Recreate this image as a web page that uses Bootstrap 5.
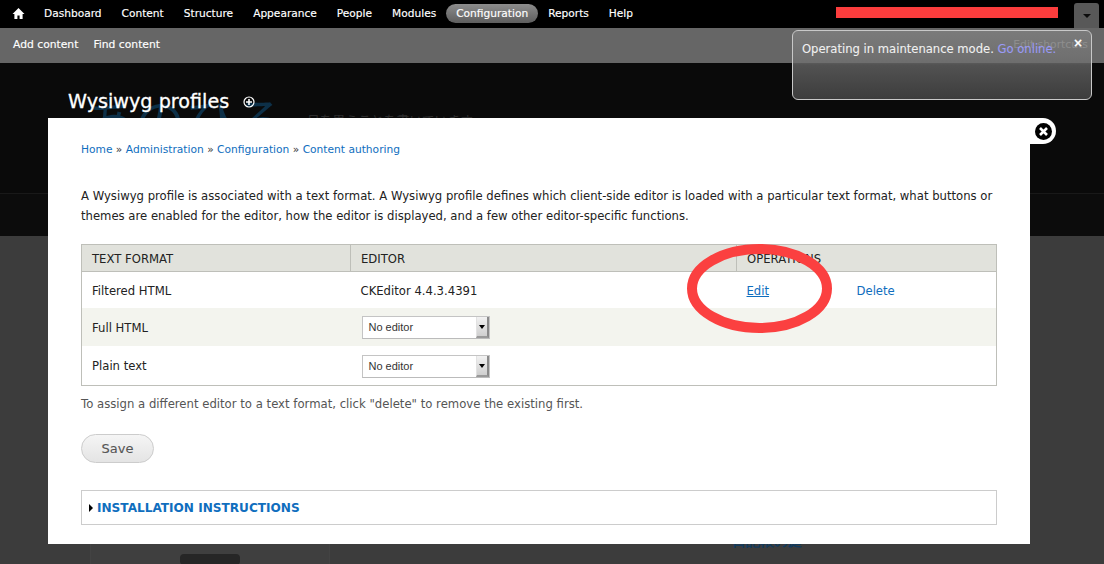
<!DOCTYPE html>
<html lang="en">
<head>
<meta charset="utf-8">
<title>Wysiwyg profiles</title>
<link rel="stylesheet" href="https://cdn.jsdelivr.net/npm/bootstrap@5.3.0/dist/css/bootstrap.min.css">
<style>
html,body{height:100%;overflow:hidden}
body{background:#3c3c3c;font-family:"DejaVu Sans","Liberation Sans",sans-serif;font-size:11.65px;color:#333;position:relative}
.adminbar{background:#000;height:28px;padding:0 0 2px 12px}
.adminbar a{color:#fff;text-decoration:none;font-size:10.62px;line-height:19px;padding:0 10px;border-radius:10px;display:block;-webkit-text-stroke:.15px #fff}
.adminbar a.home-link{padding:0;margin-right:9px;height:13px;line-height:13px}
.adminbar a.home-link svg{display:block}
.adminbar a.active-item{background:linear-gradient(#8c8c8c,#5e5e5e)}
.scutbar{background:#666;height:35px;padding-left:13px;gap:15px}
.scutbar a{color:#fff;text-decoration:none;font-size:10.75px;-webkit-text-stroke:.15px #fff}
.ghost-edit{color:#d0d0d0;font-size:10.8px;margin-left:auto;margin-right:16px}
.hero{background:#0a0a0a;height:130px;padding:27px 0 0 68px;position:relative;overflow:hidden}
.hero h1{color:#fff;font-size:19.2px;font-weight:400;margin:0;-webkit-text-stroke:.3px #fff;position:relative;z-index:1}
.plus-ico{margin-left:6px}
.ghost-layer{position:absolute;left:0;top:0;width:100%;height:55px;overflow:hidden}
.hero-band{background:#0c0c0c;height:43px;border-top:1px solid #191919}
.ghost-title{position:absolute;left:85px;top:30px;font-family:"Noto Sans CJK JP",sans-serif;font-size:50px;color:#0d3048;line-height:1;white-space:nowrap}
.ghost-sub{position:absolute;left:307px;top:47px;font-family:"Noto Sans CJK JP",sans-serif;font-size:12.8px;color:#2c2c2c;white-space:nowrap}
.ghost-bits{height:328px;padding:298px 0 0 90px;gap:402px}
.ghost-box{width:240px;height:40px;background:#3f3f3f;border:1px solid #434343;flex:none;display:flex;align-items:flex-start;justify-content:center;padding-top:19px}
.ghost-shape{width:60px;height:11px;background:#262626;border-radius:4px}
.ghost-link{color:#123a5c;font-size:14px;line-height:14px;height:14px;overflow:hidden;font-weight:700;white-space:nowrap}
.over-panel{position:absolute;left:48px;top:118px;width:982px;height:426px;background:#fff;padding:25px 33px 0 33px}
.close-tab{position:absolute;left:982px;top:0;width:26px;height:26px;background:#fff;border-radius:0 13px 13px 0;display:flex;align-items:center;justify-content:center}
.crumbs{font-size:10.67px;line-height:14px;margin-bottom:29px;color:#333}
.crumbs a,.drupal-link{color:#0f6ebe;text-decoration:none}
.intro{line-height:20px;margin:0 0 18px;font-size:11.65px;color:#222}
.wys-table{width:916px;border-collapse:collapse;border:1px solid #bebfb9;margin:0;font-size:11.65px}
.wys-table th{background:#e1e2dc;font-weight:400;height:27px;padding:3px 10px 0;border-right:1px solid #bebfb9;border-bottom:1px solid #bebfb9;color:#222;font-size:11.65px}
.wys-table th:last-child{border-right:0}
.wys-table td{padding:3px 10px 0;color:#222;vertical-align:middle}
.row-a td{height:36px;background:#fff}
.row-b td{height:38px;background:#f3f4ee;padding-top:5px}
.row-c td{height:40px;background:#fff}
.fake-select{width:128px;height:23px;border:1px solid #c4c4c4;border-bottom-color:#bbb;background:#fff;display:flex;align-items:stretch;font-family:"Liberation Sans",sans-serif;font-size:11px;color:#333;margin:-3px 0 0 1px}
.row-c .fake-select{margin-top:0}
.fake-select span:first-child{flex:1;line-height:21px;padding-left:6px}
.sel-arrow{width:13px;background:linear-gradient(#f2f2f2,#cfcfcf);border-left:1px solid #e2e2e2;border-right:2px solid #8a8a8a;border-bottom:2px solid #9a9a9a;display:flex;align-items:center;justify-content:center}
.sel-arrow::after{content:"";border-left:3px solid transparent;border-right:3px solid transparent;border-top:4px solid #000}
.help-note{margin:10px 0 22px;line-height:16px;color:#555;font-size:11.68px}
.save-btn{width:73px;height:29px;border:1px solid #ccc;border-radius:15px;background:linear-gradient(#f5f5f5,#e4e4e4);color:#555;font-size:13px;padding:0;display:block;-webkit-text-stroke:.1px #555}
.install-box{width:916px;height:35px;border:1px solid #ccc;margin-top:27px;display:flex;align-items:center;padding:1px 0 0 7px}
.install-box a{color:#0f6ebe;font-weight:700;font-size:12.1px;text-decoration:none}
.tri{width:0;height:0;border-left:4px solid #000;border-top:4px solid transparent;border-bottom:4px solid transparent;margin-right:4px}
.msg-pop{position:absolute;left:792px;top:30px;width:300px;height:70px;border:1px solid #c8c8c8;border-radius:6px;background:linear-gradient(rgba(128,128,128,.78),rgba(112,112,112,.76) 48%,rgba(100,100,100,.8) 50%,rgba(66,66,66,.9));color:#f0f0f0;font-size:11.58px;padding:10px 9px 0;-webkit-text-stroke:.1px #f0f0f0}
.msg-pop a{color:#9a9af5;text-decoration:none;-webkit-text-stroke:.1px #9a9af5}
.msg-x{position:absolute;right:8px;top:4px;color:#fff;font-weight:700;font-size:12px;line-height:16px}
.red-bar{position:absolute;left:836px;top:7px;width:222px;height:11px;background:#fb3d3d}
.user-tab{position:absolute;left:1074px;top:3px;width:25px;height:25px;background:#585858;border-radius:3px 3px 0 0;display:flex;align-items:center;justify-content:center}
.user-tab::after{content:"";border-left:4px solid transparent;border-right:4px solid transparent;border-top:4px solid #0c0c0c}
.red-ring{position:absolute;left:686px;top:244px;pointer-events:none}
</style>
</head>
<body>
<nav class="adminbar d-flex align-items-center">
  <a href="#" class="home-link"><svg width="13" height="13" viewBox="0 0 13 13"><path fill="#fff" d="M6.5 1 0.5 7h1.9v5h3v-3.4h2.2V12h3V7h1.9z"/></svg></a>
  <a href="#">Dashboard</a><a href="#">Content</a><a href="#">Structure</a><a href="#">Appearance</a><a href="#">People</a><a href="#">Modules</a><a href="#" class="active-item">Configuration</a><a href="#">Reports</a><a href="#">Help</a>
</nav>
<div class="scutbar d-flex align-items-center">
  <a href="#">Add content</a><a href="#">Find content</a><span class="ghost-edit">Edit shortcuts</span>
</div>
<header class="hero">
  <div class="ghost-layer">
    <div class="ghost-title">あのひろ</div>
    <div class="ghost-sub">日を思うことを書いています</div>
  </div>
  <h1 class="d-flex align-items-center gap-2">Wysiwyg profiles
    <svg class="plus-ico" width="12" height="12" viewBox="0 0 12 12"><circle cx="6" cy="6" r="5" fill="none" stroke="#fff" stroke-width="1.2"/><path d="M6 3v6M3 6h6" stroke="#fff" stroke-width="1.6"/></svg>
  </h1>
</header>
<div class="hero-band"></div>
<div class="ghost-bits d-flex">
  <div class="ghost-box"><div class="ghost-shape"></div></div>
  <div class="ghost-link">日記帳の庭</div>
</div>

<main class="over-panel">
  <div class="crumbs"><a href="#">Home</a> » <a href="#">Administration</a> » <a href="#">Configuration</a> » <a href="#">Content authoring</a></div>
  <p class="intro">A Wysiwyg profile is associated with a text format. A Wysiwyg profile defines which client-side editor is loaded with a particular text format, what buttons or themes are enabled for the editor, how the editor is displayed, and a few other editor-specific functions.</p>
  <table class="wys-table">
    <thead><tr><th style="width:269px">TEXT FORMAT</th><th style="width:386px">EDITOR</th><th colspan="2">OPERATIONS</th></tr></thead>
    <tbody>
      <tr class="row-a"><td>Filtered HTML</td><td>CKEditor 4.4.3.4391</td><td style="width:110px"><a class="drupal-link text-decoration-underline" href="#">Edit</a></td><td><a class="drupal-link" href="#">Delete</a></td></tr>
      <tr class="row-b"><td>Full HTML</td><td><div class="fake-select"><span>No editor</span><span class="sel-arrow"></span></div></td><td></td><td></td></tr>
      <tr class="row-c"><td>Plain text</td><td><div class="fake-select"><span>No editor</span><span class="sel-arrow"></span></div></td><td></td><td></td></tr>
    </tbody>
  </table>
  <p class="help-note">To assign a different editor to a text format, click "delete" to remove the existing first.</p>
  <button class="save-btn" type="button">Save</button>
  <div class="install-box"><span class="tri"></span><a href="#">INSTALLATION INSTRUCTIONS</a></div>
  <div class="close-tab"><svg width="17" height="17" viewBox="0 0 17 17"><circle cx="8.5" cy="8.5" r="8.5" fill="#000"/><path d="M5 5l7 7M12 5l-7 7" stroke="#fff" stroke-width="2.6"/></svg></div>
</main>

<div class="red-bar"></div>
<div class="user-tab"></div>
<div class="msg-pop">Operating in maintenance mode. <a href="#">Go online.</a><span class="msg-x">×</span></div>
<svg class="red-ring" width="150" height="92" viewBox="0 0 150 92"><ellipse cx="73.5" cy="44.5" rx="67.5" ry="39.5" fill="none" stroke="#fb4040" stroke-width="10"/></svg>
<script src="https://cdn.jsdelivr.net/npm/bootstrap@5.3.0/dist/js/bootstrap.bundle.min.js"></script>
</body>
</html>
